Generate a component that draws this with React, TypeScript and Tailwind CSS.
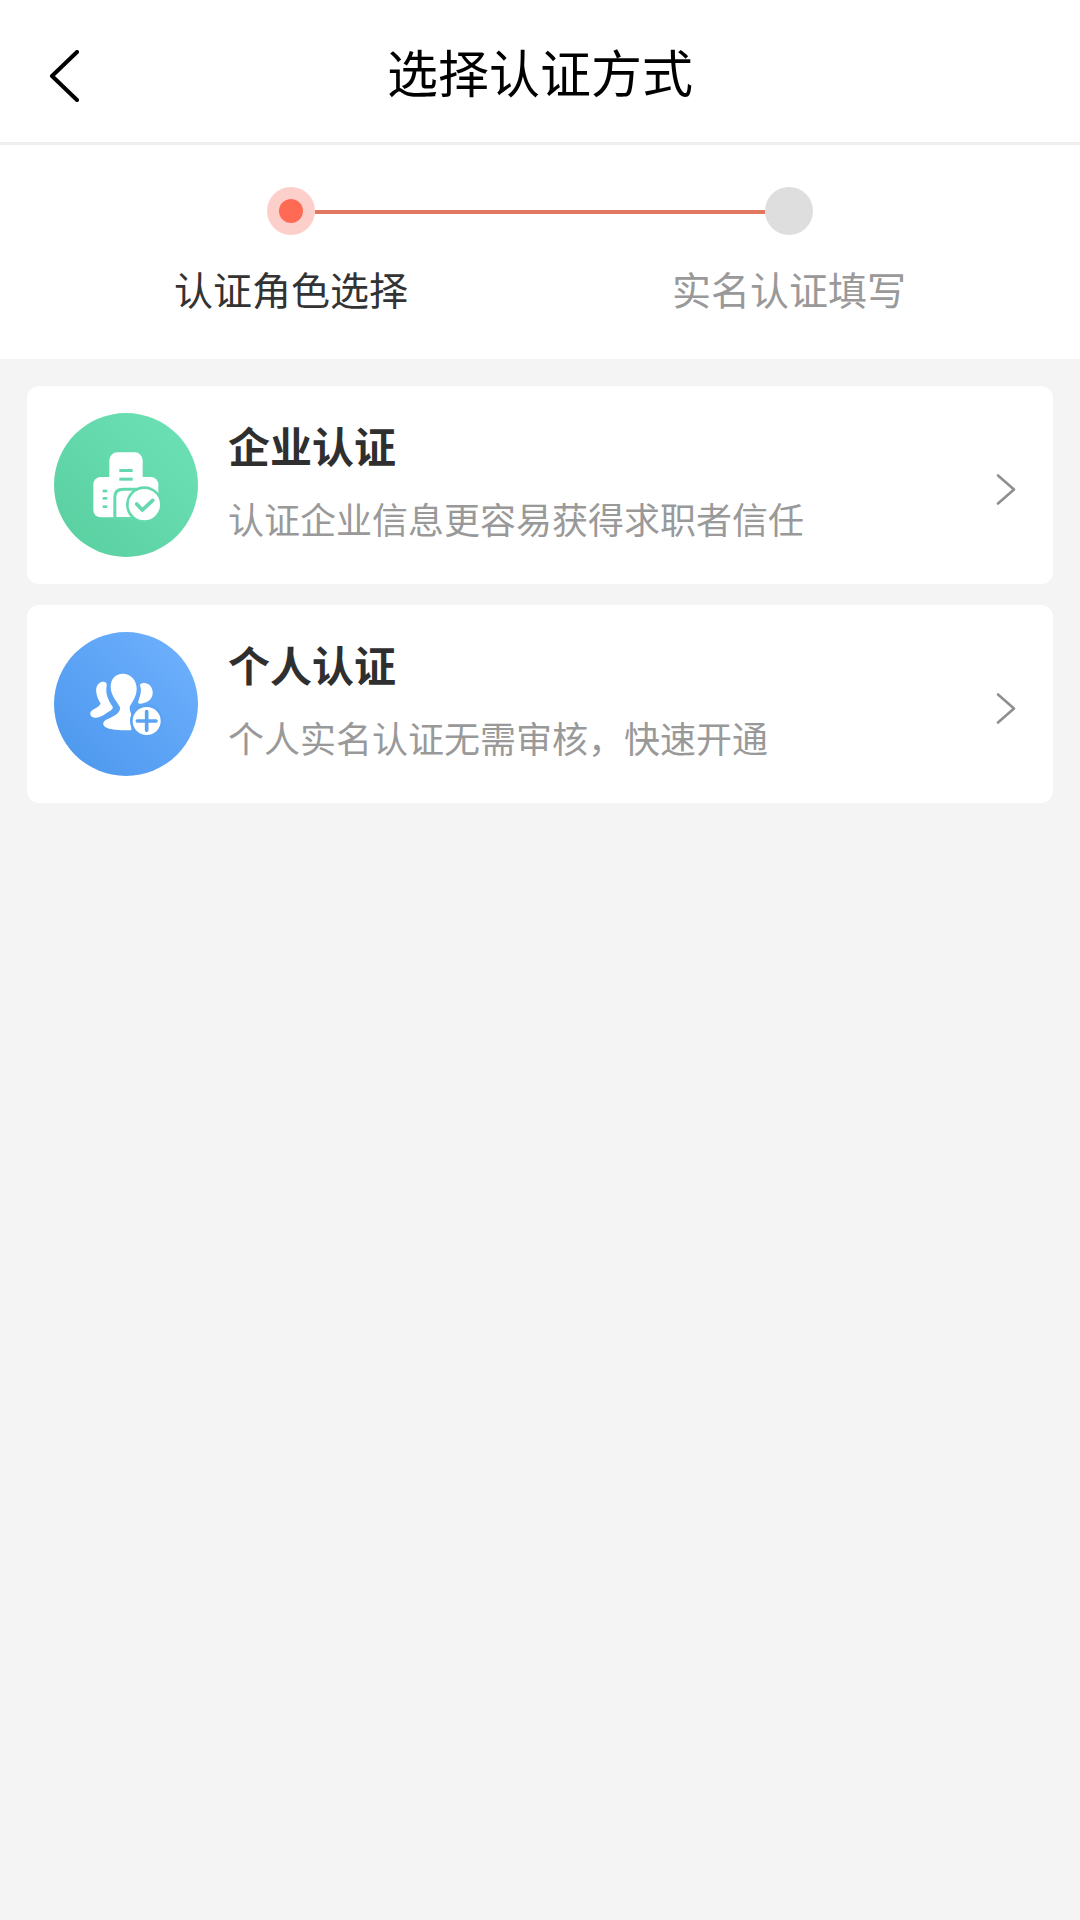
import React from "react";

const FONT = "font-['Noto_Sans_CJK_SC','Noto_Sans',sans-serif]";

function BackIcon() {
  return (
    <svg width="30" height="52" viewBox="0 0 30 52" fill="none">
      <path
        d="M28 2 L3 26 L28 50"
        stroke="#000"
        strokeWidth="4"
        strokeLinecap="round"
        strokeLinejoin="round"
      />
    </svg>
  );
}

function ChevronIcon() {
  return (
    <svg width="20" height="31" viewBox="0 0 20 31" fill="none">
      <path d="M2 1.5 L18 15.5 L2 29.5" stroke="#8f8f8f" strokeWidth="2.6" strokeLinecap="round" strokeLinejoin="round" />
    </svg>
  );
}

function BuildingIcon() {
  return (
    <svg width="144" height="144" viewBox="0 0 432 432">
      <rect x="166" y="118" width="100" height="120" rx="24" fill="#fff" />
      <rect x="118" y="192" width="195" height="121" rx="22" fill="#fff" />
      <rect x="196" y="168" width="40" height="9" fill="#63d9ad" />
      <rect x="196" y="194" width="40" height="9" fill="#63d9ad" />
      <path d="M178 320 V252 Q178 224 208 224 H262 V320 Z" fill="#63d9ad" />
      <path d="M187 312 V252 Q187 233 208 233 H240 V312 Z" fill="#fff" />
      <rect x="146" y="230" width="14" height="8" fill="#63d9ad" />
      <rect x="146" y="252" width="14" height="8" fill="#63d9ad" />
      <rect x="146" y="277" width="14" height="8" fill="#63d9ad" />
      <circle cx="271" cy="275" r="55" fill="#63d9ad" />
      <circle cx="271" cy="275" r="47" fill="#fff" />
      <path d="M248 273 L265 291 L296 262" fill="none" stroke="#63d9ad" strokeWidth="11" strokeLinecap="round" strokeLinejoin="round" />
    </svg>
  );
}

function PeopleIcon() {
  return (
    <svg width="144" height="144" viewBox="0 0 432 432">
      <path d="M142 150 C152 147 160 152 158 161 C154 180 160 202 176 224 C178 230 172 234 166 238 C154 246 140 257 126 257 C112 258 106 248 110 240 C116 230 136 228 140 214 C128 196 116 160 142 150 Z" fill="#fff" />
      <path d="M270 153 C288 153 298 170 296 186 C293 204 280 214 256 215 C250 214 254 206 256 198 C262 182 262 170 258 160 C258 155 264 152 270 153 Z" fill="#fff" />
      <path d="M206 125 C232 125 248 146 248 170 C248 192 236 208 228 222 C224 234 232 240 232 252 L232 295 C210 295 176 295 158 287 C142 280 146 268 160 262 C178 254 200 244 198 226 C190 208 170 192 170 164 C170 140 186 125 206 125 Z" fill="#fff" />
      <circle cx="278" cy="267" r="50" fill="#5ba3f4" />
      <circle cx="278" cy="267" r="42" fill="#fff" />
      <path d="M278 239 V295 M250 267 H306" stroke="#5ba3f4" strokeWidth="11" strokeLinecap="round" />
    </svg>
  );
}

type CardProps = {
  title: string;
  desc: string;
  circle: string;
  icon: React.ReactNode;
};

function AuthCard({ title, desc, circle, icon }: CardProps) {
  return (
    <div className="flex h-[198px] items-center rounded-[12px] bg-white pl-[27px] pr-[37px]">
      <div className={`h-[144px] w-[144px] shrink-0 rounded-full ${circle}`}>{icon}</div>
      <div className="ml-[30px] mb-[8px] flex flex-col">
        <div className="text-[42px] leading-[50px] font-bold text-[#2f2f2f]">{title}</div>
        <div className="mt-[23px] text-[36px] leading-[50px] text-[#999]">{desc}</div>
      </div>
      <div className="ml-auto mt-[8px]">
        <ChevronIcon />
      </div>
    </div>
  );
}

export default function App() {
  return (
    <div className={`min-h-[1920px] bg-[#f4f4f4] ${FONT}`}>
      <header className="grid h-[145px] grid-cols-[1fr_auto_1fr] items-center border-b-[3px] border-[#eeeeee] bg-white">
        <div className="pl-[49px] pt-[10px]">
          <BackIcon />
        </div>
        <h1 className="pb-[1px] text-[51px] leading-[60px] font-normal text-black">选择认证方式</h1>
        <div />
      </header>

      <section className="h-[214px] bg-white pt-[42px]">
        <div className="flex items-center justify-center">
          <div className="flex h-[48px] w-[48px] items-center justify-center rounded-full bg-[#fdcfca]">
            <div className="h-[24px] w-[24px] rounded-full bg-[#ff6a55]" />
          </div>
          <div className="mt-[2px] h-[4px] w-[450px] bg-[#e0785f]" />
          <div className="h-[48px] w-[48px] rounded-full bg-[#dedede]" />
        </div>
        <div className="mt-[28px] flex justify-center text-[39px] leading-[50px]">
          <div className="w-[498px] text-center text-[#333]">认证角色选择</div>
          <div className="w-[498px] text-center text-[#999]">实名认证填写</div>
        </div>
      </section>

      <main className="flex flex-col gap-[21px] px-[27px] pt-[27px]">
        <AuthCard
          title="企业认证"
          desc="认证企业信息更容易获得求职者信任"
          circle="bg-linear-to-tr from-[#58cf9f] to-[#6ee2b8]"
          icon={<BuildingIcon />}
        />
        <AuthCard
          title="个人认证"
          desc="个人实名认证无需审核，快速开通"
          circle="bg-linear-to-tr from-[#4a96ec] to-[#70b2ff]"
          icon={<PeopleIcon />}
        />
      </main>
    </div>
  );
}
